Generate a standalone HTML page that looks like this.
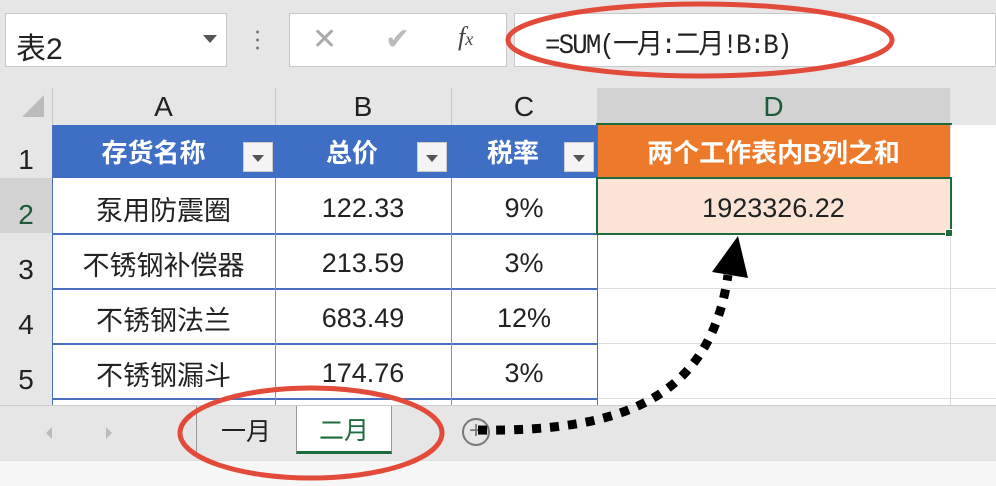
<!DOCTYPE html>
<html><head><meta charset="utf-8"><style>
*{margin:0;padding:0;box-sizing:border-box}
body{width:996px;height:486px;overflow:hidden;background:#e6e6e6;position:relative;font-family:"Liberation Sans","Noto Sans CJK SC",sans-serif}
.a{position:absolute}
.c{position:absolute;display:flex;align-items:center;justify-content:center;font-size:27px;color:#222}
.d{padding-top:6px}
.rh{position:absolute;left:0;width:52px;font-size:28px;color:#222;display:flex;align-items:flex-end;justify-content:center;padding-bottom:2px;background:#e6e6e6}
.dd{position:absolute;width:30px;height:30px;background:#f4f4f4;border:1px solid #ccc}
.dd:after{content:"";position:absolute;left:8px;top:12px;border-left:6px solid transparent;border-right:6px solid transparent;border-top:7px solid #555}
</style></head><body>
<div class="a" style="left:5px;top:13px;width:222px;height:54px;background:#fff;border:1px solid #c8c8c8"></div>
<div class="a" style="left:16px;top:24px;font-size:30px;color:#222">表2</div>
<div class="a" style="left:203px;top:35px;border-left:7px solid transparent;border-right:7px solid transparent;border-top:8px solid #555"></div>
<div class="a" style="left:256px;top:28px;width:3px;height:22px;background:radial-gradient(circle,#777 1.3px,transparent 1.6px) 0 0/3px 8px"></div>
<div class="a" style="left:289px;top:13px;width:218px;height:54px;background:#fff;border:1px solid #c8c8c8"></div>
<div class="a" style="left:312px;top:22px;font-size:30px;color:#aaa">✕</div>
<div class="a" style="left:385px;top:22px;font-size:30px;color:#bbb">✔</div>
<div class="a" style="left:458px;top:22px;font-size:26px;color:#444;font-style:italic;font-family:'Liberation Serif',serif">f<span style="font-size:18px">x</span></div>
<div class="a" style="left:514px;top:13px;width:482px;height:54px;background:#fff;border:1px solid #c8c8c8"></div>
<div class="a" style="left:545px;top:22px;font-size:28px;color:#222;font-family:'Liberation Mono','Noto Sans CJK SC',monospace;letter-spacing:-2px;transform:scaleX(0.92);transform-origin:left">=SUM(一月:二月!B:B)</div>
<div class="a" style="left:0;top:88px;width:996px;height:37px;background:#e6e6e6"></div>
<div class="a" style="left:597px;top:88px;width:353px;height:37px;background:#d2d2d2"></div>
<div class="a" style="left:22px;top:95px;width:0;height:0;border-left:22px solid transparent;border-bottom:22px solid #bbb"></div>
<div class="c" style="left:52px;top:88px;width:223px;height:37px;font-size:28px">A</div>
<div class="c" style="left:275px;top:88px;width:176px;height:37px;font-size:28px">B</div>
<div class="c" style="left:451px;top:88px;width:146px;height:37px;font-size:28px">C</div>
<div class="c" style="left:597px;top:88px;width:353px;height:37px;font-size:28px;color:#1d5a3a">D</div>
<div class="a" style="left:275px;top:88px;width:1px;height:37px;background:#c8c8c8"></div>
<div class="a" style="left:451px;top:88px;width:1px;height:37px;background:#c8c8c8"></div>
<div class="a" style="left:52px;top:88px;width:1px;height:37px;background:#c8c8c8"></div>
<div class="a" style="left:52px;top:125px;width:944px;height:280px;background:#fff"></div>
<div class="rh" style="top:125px;height:53px">1</div>
<div class="rh" style="top:178px;height:55px;background:#d2d2d2;color:#1d5a3a">2</div>
<div class="rh" style="top:233px;height:55px">3</div>
<div class="rh" style="top:288px;height:55px">4</div>
<div class="rh" style="top:343px;height:55px">5</div>
<div class="a" style="left:0;top:398px;width:52px;height:7px;background:#e6e6e6"></div>
<div class="a" style="left:52px;top:125px;width:545px;height:53px;background:#3f6fc4"></div>
<div class="c" style="left:52px;top:125px;width:223px;height:53px;color:#fff;font-weight:bold;font-size:26px;padding-right:20px">存货名称</div>
<div class="dd" style="left:243px;top:142px"></div>
<div class="c" style="left:275px;top:125px;width:176px;height:53px;color:#fff;font-weight:bold;font-size:26px;padding-right:22px">总价</div>
<div class="dd" style="left:417px;top:142px"></div>
<div class="c" style="left:451px;top:125px;width:146px;height:53px;color:#fff;font-weight:bold;font-size:26px;padding-right:22px">税率</div>
<div class="dd" style="left:564px;top:142px"></div>
<div class="a" style="left:597px;top:125px;width:353px;height:53px;background:#ec7a2a"></div>
<div class="c" style="left:597px;top:125px;width:353px;height:53px;color:#fff;font-weight:bold;font-size:26px">两个工作表内B列之和</div>
<div class="a" style="left:52px;top:233px;width:545px;height:2px;background:#4a6fc0"></div>
<div class="a" style="left:52px;top:288px;width:545px;height:2px;background:#4a6fc0"></div>
<div class="a" style="left:52px;top:343px;width:545px;height:2px;background:#4a6fc0"></div>
<div class="a" style="left:52px;top:398px;width:545px;height:2px;background:#4a6fc0"></div>
<div class="a" style="left:597px;top:288px;width:399px;height:1px;background:#ddd"></div>
<div class="a" style="left:597px;top:343px;width:399px;height:1px;background:#ddd"></div>
<div class="a" style="left:597px;top:398px;width:399px;height:1px;background:#ddd"></div>
<div class="a" style="left:950px;top:125px;width:1px;height:280px;background:#ddd"></div>
<div class="a" style="left:275px;top:178px;width:1px;height:227px;background:#7c8fcc"></div>
<div class="a" style="left:451px;top:178px;width:1px;height:227px;background:#7c8fcc"></div>
<div class="a" style="left:597px;top:125px;width:1px;height:280px;background:#4a6fc0"></div>
<div class="a" style="left:52px;top:125px;width:1px;height:280px;background:#4a6fc0"></div>
<div class="c d" style="left:52px;top:178px;width:223px;height:55px">泵用防震圈</div>
<div class="c d" style="left:275px;top:178px;width:176px;height:55px">122.33</div>
<div class="c d" style="left:451px;top:178px;width:146px;height:55px">9%</div>
<div class="c d" style="left:52px;top:233px;width:223px;height:55px">不锈钢补偿器</div>
<div class="c d" style="left:275px;top:233px;width:176px;height:55px">213.59</div>
<div class="c d" style="left:451px;top:233px;width:146px;height:55px">3%</div>
<div class="c d" style="left:52px;top:288px;width:223px;height:55px">不锈钢法兰</div>
<div class="c d" style="left:275px;top:288px;width:176px;height:55px">683.49</div>
<div class="c d" style="left:451px;top:288px;width:146px;height:55px">12%</div>
<div class="c d" style="left:52px;top:343px;width:223px;height:55px">不锈钢漏斗</div>
<div class="c d" style="left:275px;top:343px;width:176px;height:55px">174.76</div>
<div class="c d" style="left:451px;top:343px;width:146px;height:55px">3%</div>
<div class="a" style="left:596px;top:177px;width:356px;height:58px;background:#fbe3d5;border:2px solid #1e6b3e"></div>
<div class="c d" style="left:597px;top:178px;width:353px;height:55px">1923326.22</div>
<div class="a" style="left:945px;top:229px;width:8px;height:8px;background:#1e6b3e;border:1px solid #fff"></div>
<div class="a" style="left:596px;top:123px;width:356px;height:2px;background:#1e6b3e"></div>
<div class="a" style="left:0;top:405px;width:996px;height:55px;background:#e6e6e6;border-top:1px solid #ccc"></div>
<div class="a" style="left:0;top:460px;width:996px;height:26px;background:#f7f7f7;border-top:1px solid #ddd"></div>
<div class="a" style="left:46px;top:427px;border-top:6px solid transparent;border-bottom:6px solid transparent;border-right:6px solid #bbb"></div>
<div class="a" style="left:106px;top:427px;border-top:6px solid transparent;border-bottom:6px solid transparent;border-left:6px solid #bbb"></div>
<div class="a" style="left:196px;top:406px;width:100px;height:48px;background:#e6e6e6;border-left:1px solid #999"></div>
<div class="c" style="left:196px;top:406px;width:100px;height:48px;font-size:25px">一月</div>
<div class="a" style="left:296px;top:406px;width:96px;height:48px;background:#fff;border-left:1px solid #999;border-right:1px solid #999;border-bottom:3px solid #1e6b3e"></div>
<div class="c" style="left:296px;top:406px;width:96px;height:46px;font-size:25px;color:#1e6b3e">二月</div>
<div class="a" style="left:462px;top:418px;width:28px;height:28px;border:2px solid #777;border-radius:50%;color:#777;font-size:24px;line-height:22px;text-align:center">+</div>
<svg class="a" style="left:0;top:0" width="996" height="486">
<g fill="none" stroke="#e24a3a" stroke-width="5">
<ellipse cx="700" cy="40" rx="192" ry="36"/>
<ellipse cx="311" cy="433" rx="131" ry="45"/>
</g>
<path d="M478,430 C620,432 710,400 728,275" fill="none" stroke="#000" stroke-width="9" stroke-dasharray="9 9"/>
<path d="M712,272 L738,236 L748,278 Z" fill="#000"/>
</svg>
</body></html>
